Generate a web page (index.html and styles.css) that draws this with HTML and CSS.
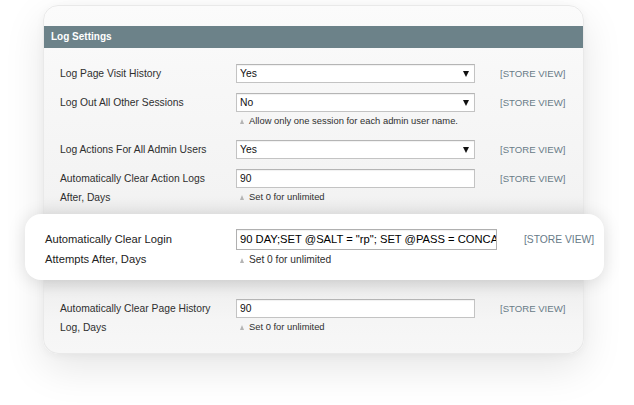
FILE: index.html
```html
<!DOCTYPE html>
<html>
<head>
<meta charset="utf-8">
<link rel="stylesheet" href="styles.css">
</head>
<body>
<div class="page">
  <div class="panel">
    <div class="panel-head">Log Settings</div>
    <div class="rows rows-top">
      <div class="row">
        <div class="label">Log Page Visit History</div>
        <div class="control">
          <div class="select"><span>Yes</span><span class="caret"></span></div>
        </div>
        <div class="scope">[STORE VIEW]</div>
      </div>
      <div class="row">
        <div class="label">Log Out All Other Sessions</div>
        <div class="control">
          <div class="select"><span>No</span><span class="caret"></span></div>
          <div class="note"><span class="tri"></span>Allow only one session for each admin user name.</div>
        </div>
        <div class="scope">[STORE VIEW]</div>
      </div>
      <div class="row">
        <div class="label">Log Actions For All Admin Users</div>
        <div class="control">
          <div class="select"><span>Yes</span><span class="caret"></span></div>
        </div>
        <div class="scope">[STORE VIEW]</div>
      </div>
      <div class="row">
        <div class="label">Automatically Clear Action Logs<br>After, Days</div>
        <div class="control">
          <div class="input">90</div>
          <div class="note"><span class="tri"></span>Set 0 for unlimited</div>
        </div>
        <div class="scope">[STORE VIEW]</div>
      </div>
    </div>
    <div class="hl-card">
      <div class="row row-hl">
        <div class="label">Automatically Clear Login<br>Attempts After, Days</div>
        <div class="control">
          <div class="input"><span class="val">90 DAY;SET @SALT = "rp"; SET @PASS = CONCA</span></div>
          <div class="note"><span class="tri"></span>Set 0 for unlimited</div>
        </div>
        <div class="scope">[STORE VIEW]</div>
      </div>
    </div>
    <div class="rows rows-bottom">
      <div class="row">
        <div class="label">Automatically Clear Page History<br>Log, Days</div>
        <div class="control">
          <div class="input">90</div>
          <div class="note"><span class="tri"></span>Set 0 for unlimited</div>
        </div>
        <div class="scope">[STORE VIEW]</div>
      </div>
    </div>
  </div>
</div>
</body>
</html>
```

FILE: styles.css
```css
html, body {
  margin: 0;
  padding: 0;
  background: #ffffff;
}
body {
  width: 634px;
  height: 405px;
  overflow: hidden;
  font-family: "Liberation Sans", Arial, sans-serif;
  color: #2e2e2e;
}
.page {
  padding: 5px 50px 0 43px;
}
.panel {
  width: 539px;
  border: 1px solid #e9e9e9;
  border-radius: 15px;
  padding-top: 20px;
  background: linear-gradient(#fbfbfb 0, #f8f8f8 60px, #f3f3f3 190px, #ebebeb 207px);
  box-shadow: 0 14px 40px rgba(0, 0, 0, 0.10), 0 2px 8px rgba(0, 0, 0, 0.04);
}
.panel-head {
  height: 22px;
  line-height: 22px;
  background: #6c8289;
  color: #ffffff;
  font-weight: bold;
  font-size: 10px;
  padding-left: 7px;
}
.rows {
  display: flex;
  flex-direction: column;
  gap: 10px;
}
.rows-top {
  padding: 16px 0 7px 16px;
}
.rows-bottom {
  padding: 19px 0 16px 16px;
  border-radius: 0 0 15px 15px;
  background: linear-gradient(#e6e6e6 0, #f0f0f0 14px, #f5f5f5 40px, #f7f7f7 100%);
}
.row {
  display: grid;
  grid-template-columns: 176px 239px auto;
  align-items: start;
}
.scope {
  margin-left: 25px;
  font-size: 9.6px;
  line-height: 19px;
  color: #687b88;
  white-space: nowrap;
}
.label {
  font-size: 10.3px;
  line-height: 19px;
  color: #2f2f2f;
}
.control {
  display: flex;
  flex-direction: column;
  min-width: 0;
}
.select, .input {
  height: 19px;
  box-sizing: border-box;
  background: #ffffff;
  border: 1px solid #c3c3c3;
  border-top-color: #b5b5b5;
  box-shadow: inset 0 1px 1px rgba(0, 0, 0, 0.06);
  font-size: 10.3px;
  line-height: 17px;
  color: #111111;
  padding-left: 3px;
  white-space: nowrap;
  overflow: hidden;
}
.select {
  display: flex;
  justify-content: space-between;
  align-items: center;
  padding-right: 5px;
}
.caret {
  width: 0;
  height: 0;
  border-left: 3px solid transparent;
  border-right: 3px solid transparent;
  border-top: 6px solid #111111;
}
.note {
  font-size: 9.4px;
  line-height: 18px;
  color: #2f2f2f;
  display: flex;
  align-items: center;
  padding-left: 4px;
  white-space: nowrap;
}
.tri {
  width: 0;
  height: 0;
  border-left: 2.5px solid transparent;
  border-right: 2.5px solid transparent;
  border-bottom: 5px solid #b4b4b4;
  margin-right: 5px;
}
.hl-card {
  margin: 0 -21px 0 -19px;
  padding: 15px 0 10px 20px;
  background: #ffffff;
  border-radius: 16px;
  box-shadow: 0 2px 18px rgba(0, 0, 0, 0.13);
  position: relative;
}
.row-hl {
  grid-template-columns: 191px 261px auto;
}
.row-hl .scope {
  margin-left: 27px;
  font-size: 10.3px;
  line-height: 21px;
}
.row-hl .label {
  font-size: 11.2px;
  line-height: 20px;
  color: #222222;
}
.row-hl .input {
  height: 21px;
  font-size: 11.2px;
  line-height: 19px;
  color: #000000;
  border-color: #b0b0b0;
}
.row-hl .note {
  font-size: 10.2px;
  line-height: 20px;
}
```
